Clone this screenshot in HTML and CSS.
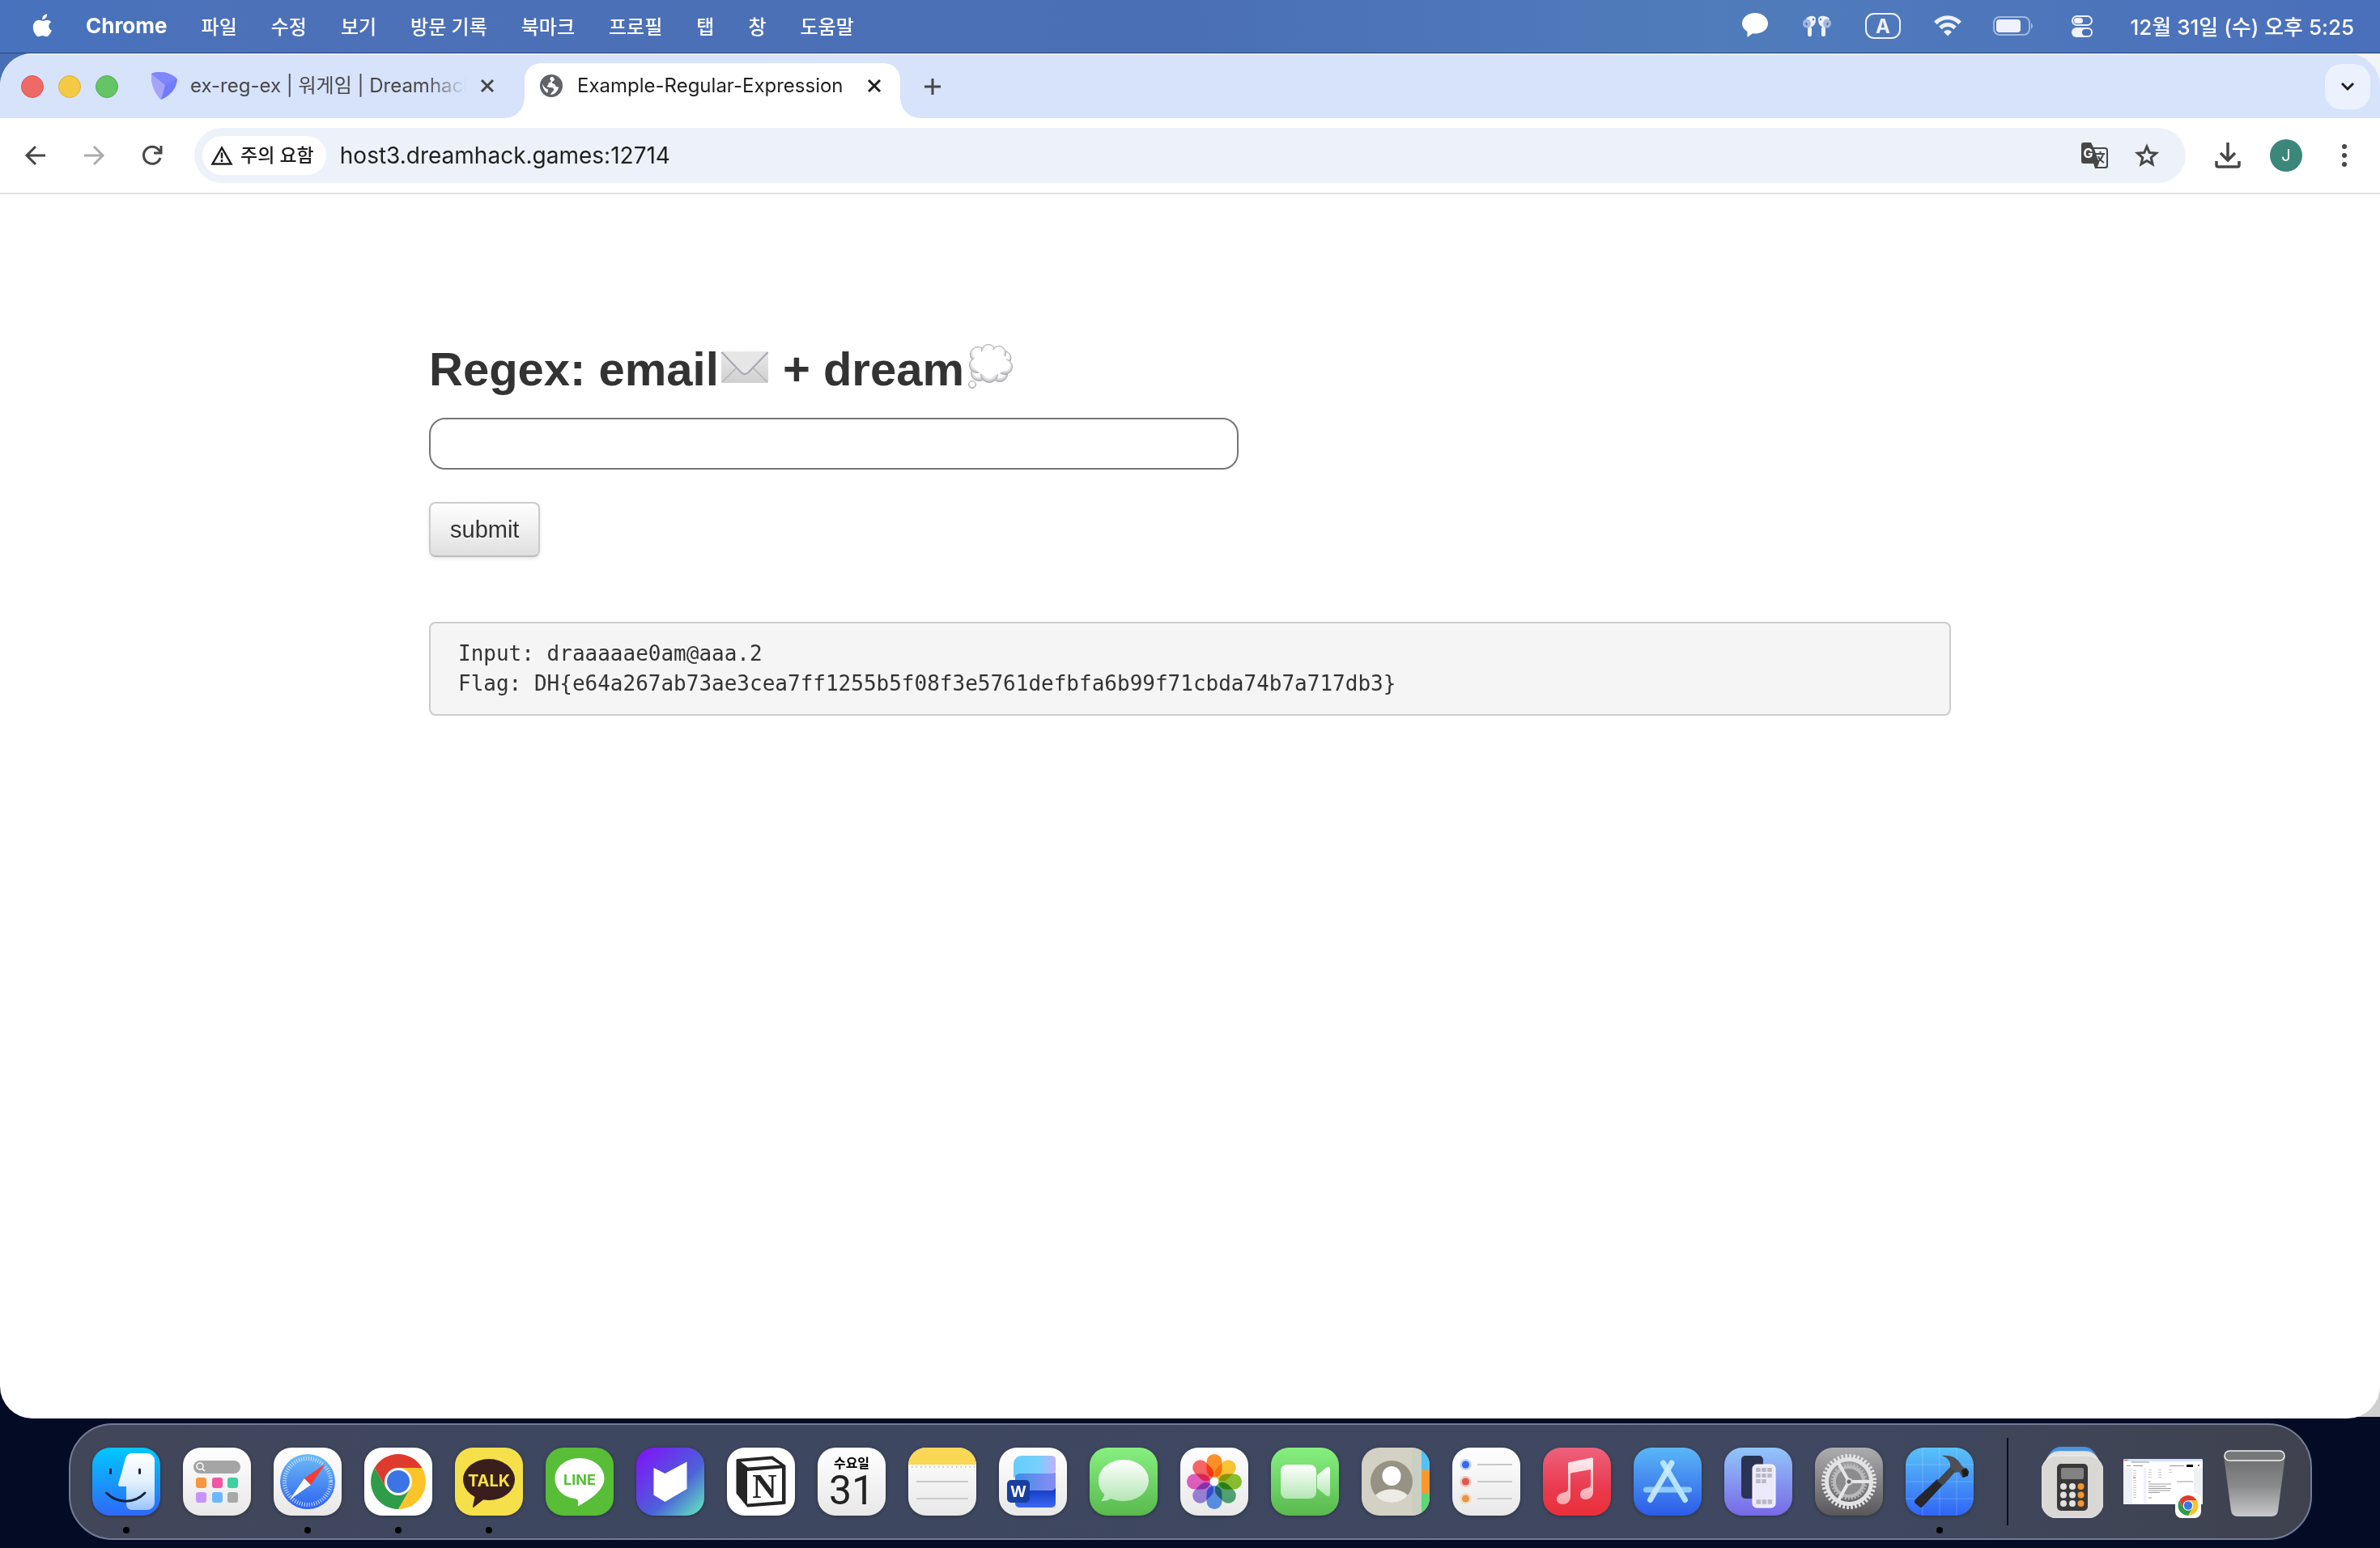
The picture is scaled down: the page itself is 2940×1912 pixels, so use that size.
FILE: index.html
```html
<!DOCTYPE html>
<html lang="ko">
<head>
    <meta charset="UTF-8">
    <meta name="viewport" content="width=device-width, initial-scale=1.0">
    <title>Example-Regular-Expression</title>
    <link rel="stylesheet" href="styles.css">
</head>
<body>
    <!-- shared gradients and the chrome logo -->
    <svg class="defs" width="0" height="0" aria-hidden="true">
        <defs>
            <linearGradient id="white" x2="0" y2="1"><stop offset="0" stop-color="#fff"/><stop offset="1" stop-color="#e8e8e8"/></linearGradient>
            <linearGradient id="green" x2="0" y2="1"><stop offset="0" stop-color="#86f07f"/><stop offset="1" stop-color="#59b94e"/></linearGradient>
            <linearGradient id="mint" x2="0" y2="1"><stop offset="0" stop-color="#fff"/><stop offset="1" stop-color="#b4e6b4"/></linearGradient>
            <linearGradient id="finder" x2="0" y2="1"><stop offset="0" stop-color="#00c8ff"/><stop offset="1" stop-color="#2f68f6"/></linearGradient>
            <linearGradient id="face" x2="0" y2="1"><stop offset="0" stop-color="#fff"/><stop offset=".5" stop-color="#e2f2fd"/><stop offset="1" stop-color="#9cc4fb"/></linearGradient>
            <linearGradient id="safari" x2="0" y2="1"><stop offset="0" stop-color="#6cbcf5"/><stop offset="1" stop-color="#2f62f0"/></linearGradient>
            <linearGradient id="purple" x2="1" y2="1"><stop offset=".1" stop-color="#7a1cf5"/><stop offset=".6" stop-color="#4b62d8"/><stop offset="1" stop-color="#66f0bc"/></linearGradient>
            <linearGradient id="music" x2="0" y2="1"><stop offset="0" stop-color="#ee617c"/><stop offset=".6" stop-color="#ea3a4e"/><stop offset="1" stop-color="#e92f38"/></linearGradient>
            <linearGradient id="note" x2="0" y2="1"><stop offset="0" stop-color="#fdeef0"/><stop offset="1" stop-color="#f6a5ac"/></linearGradient>
            <linearGradient id="store" x2="0" y2="1"><stop offset="0" stop-color="#5bb6f6"/><stop offset="1" stop-color="#2c5be8"/></linearGradient>
            <linearGradient id="mirror" x2="0" y2="1"><stop offset="0" stop-color="#92c6fa"/><stop offset="1" stop-color="#7868e6"/></linearGradient>
            <linearGradient id="gray" x2="0" y2="1"><stop offset="0" stop-color="#adadb0"/><stop offset="1" stop-color="#59575a"/></linearGradient>
            <linearGradient id="xcode" x2="0" y2="1"><stop offset="0" stop-color="#5ac2f9"/><stop offset="1" stop-color="#3065f5"/></linearGradient>
            <linearGradient id="bin" x2="0" y2="1"><stop offset="0" stop-color="#6c6d6f"/><stop offset=".5" stop-color="#898a8c"/><stop offset="1" stop-color="#c9c9cc"/></linearGradient>
            <linearGradient id="wordTop"><stop offset="0" stop-color="#66cdfb"/><stop offset=".6" stop-color="#76d0fb"/><stop offset="1" stop-color="#c3aefa"/></linearGradient>
            <linearGradient id="wordMid"><stop offset="0" stop-color="#3d8ee8"/><stop offset="1" stop-color="#8d8cf2"/></linearGradient>
            <linearGradient id="wordLow" x2="0" y2="1"><stop offset="0" stop-color="#0a31b4"/><stop offset="1" stop-color="#3d68f5"/></linearGradient>
            <linearGradient id="envelope" x2="0" y2="1"><stop offset="0" stop-color="#eaeaea"/><stop offset="1" stop-color="#cfcfcf"/></linearGradient>
            <radialGradient id="puff" cx=".5" cy=".4" r=".6"><stop offset=".5" stop-color="#fff"/><stop offset="1" stop-color="#b4b4b7"/></radialGradient>
        </defs>
        <symbol id="chrome" viewBox="0 0 84 84">
            <path fill="#e03a2f" d="M12.6 25A34 34 0 0 1 71.4 25H42L27.3 50.5z"/>
            <path fill="#fcc429" d="M71.4 25A34 34 0 0 1 42 76L56.7 50.5 42 25z"/>
            <path fill="#2f9c4a" d="M42 76A34 34 0 0 1 12.6 25L27.3 50.5H56.7z"/>
            <circle cx="42" cy="42" r="17" fill="#fff"/>
            <circle cx="42" cy="42" r="14" fill="#3b74e4"/>
        </symbol>
    </svg>

    <header class="menubar">
        <nav class="menus">
            <svg width="26" height="34" viewBox="0 0 28 34"><path fill="#fff" d="M19.500 1c.2 2-.6 3.900-1.700 5.300-1.200 1.400-3 2.400-4.700 2.300-.2-1.900.7-3.800 1.700-5C16 2.200 18 1.200 19.500 1zM25 12c-2 1.200-3.200 3-3.200 5.300 0 2.700 1.600 4.700 3.900 5.600-.5 1.500-1.200 3-2.200 4.400-1.300 2-2.700 3.900-4.800 3.900-2.100.1-2.800-1.200-5.200-1.200s-3.200 1.200-5.100 1.300c-2.100.1-3.700-2.100-5-4C.7 23.500-.2 17 2.400 13c1.500-2.500 3.800-3.900 6.200-3.900 2.300 0 3.800 1.300 5.700 1.300 1.900 0 3-1.300 5.700-1.300 2 0 3.800 1 5 2.900z"/></svg>
            <b>Chrome</b>
            <span>파일</span>
            <span>수정</span>
            <span>보기</span>
            <span>방문 기록</span>
            <span>북마크</span>
            <span>프로필</span>
            <span>탭</span>
            <span>창</span>
            <span>도움말</span>
        </nav>
        <div class="status">
            <svg width="38" height="34" viewBox="0 0 38 34"><path fill="#fff" d="M16 1c8.900 0 16 5.600 16 13s-7.100 12.500-16 12.500c-1 0-2 0-3-.2L6.500 31v-7C2.500 21.600 0 18 0 14 0 6.600 7.100 1 16 1z"/></svg>
            <svg width="42" height="34" viewBox="0 0 42 34"><path fill="#eef2fb" d="M5 8C8 4 17 3 17 9c0 5-2 8-5 9H8zM34 8C31 4 20 3 20 9c0 5 2 8 5 9h4z"/><rect x="7" y="18" width="5" height="12" rx="2" fill="#eef2fb"/><rect x="24" y="18" width="5" height="12" rx="2" fill="#eef2fb"/><ellipse cx="6" cy="14" rx="5" ry="5.500" fill="#a3b8df"/><ellipse cx="31" cy="14" rx="5" ry="5.500" fill="#a3b8df"/><circle cx="14" cy="9" r="1.200" fill="#4a70b8"/><circle cx="23" cy="9" r="1.200" fill="#4a70b8"/><path d="M5 13l1 3M32 13l-1 3" stroke="#4a70b8" stroke-width="2"/></svg>
            <svg width="48" height="34" viewBox="0 0 48 34"><rect x="1" y="2" width="42" height="30" rx="10" fill="none" stroke="#eef2fb" stroke-width="2"/><text x="22" y="26" class="input-mark">A</text></svg>
            <svg width="36" height="34" viewBox="0 0 36 34"><g fill="none" stroke="#eef2fb" stroke-width="5"><path d="M3 13.500C11 4.500 25 4.500 33 13.500"/><path d="M9 19.500c5-5.500 13-5.500 18 0"/></g><path fill="#eef2fb" d="M13 24.500c3-3.300 7-3.300 10 0l-5 5z"/></svg>
            <svg width="52" height="34" viewBox="0 0 52 34"><rect x="3" y="6" width="44" height="22" rx="7" fill="none" stroke="#a3b8df" stroke-width="2"/><rect x="6" y="9" width="30" height="16" rx="4" fill="#eef2fb"/><path fill="#a3b8df" d="M49 13a5 5 0 0 1 0 8z"/></svg>
            <svg width="48" height="34" viewBox="0 0 48 34"><rect x="12" y="5" width="24" height="11" rx="5.500" fill="none" stroke="#eef2fb" stroke-width="2"/><rect x="14" y="7" width="11" height="7" rx="3.500" fill="#eef2fb"/><rect x="11" y="19" width="26" height="12" rx="6" fill="#eef2fb"/><rect x="24" y="21" width="11" height="8" rx="4" fill="#4b70b7"/></svg>
            <time>12월 31일 (수) 오후 5:25</time>
        </div>
    </header>

    <main class="window">
        <div class="tabstrip">
            <div class="lights"><i class="close-light"></i><i class="min-light"></i><i class="max-light"></i></div>
            <div class="tab">
                <svg width="32" height="34" viewBox="0 0 32 34"><path fill="#6f7cfb" d="M0 2c10-4 24-2 32 7-1 11-8 20-20 25C6 28-1 15 0 2z"/><path fill="#a6a4fa" d="M0 2l17 14-5 18C4 27-1 15 0 2z"/><path fill="#7f86fb" d="M0 2c10-4 24-2 32 7l-15 7z"/></svg>
                <span class="title">ex-reg-ex | 워게임 | Dreamhack</span>
                <button class="plain" aria-label="탭 닫기"><svg width="20" height="20" viewBox="0 0 20 20"><path d="M3 3l14 14M17 3L3 17" stroke="#474747" stroke-width="3"/></svg></button>
            </div>
            <div class="tab active">
                <svg width="32" height="32" viewBox="0 0 32 32"><circle cx="16" cy="16" r="14" fill="#5f6368"/><path fill="#fff" d="M16 5c-2 1-2 3-1 4 2 1 0 3-2 3-1 1 0 3-2 4-1 1 1 2 4 2 3 0 4 1 4 3s-2 2-3 4l-1 2c5 0 10-5 10-10-2 1-4 0-4-2-1-2-4-1-4-3s3-2 3-4l-2-3zM5 13c0 5 2 9 6 12 1-2 2-4 0-5-3-1-5-4-6-7z"/></svg>
                <span class="title">Example-Regular-Expression</span>
                <button class="plain" aria-label="탭 닫기"><svg width="20" height="20" viewBox="0 0 20 20"><path d="M3 3l14 14M17 3L3 17" stroke="#1f1f1f" stroke-width="3"/></svg></button>
            </div>
            <button class="plain newtab" aria-label="새 탭"><svg width="22" height="22" viewBox="0 0 22 22"><path d="M11 1v20M1 11h20" stroke="#474747" stroke-width="3"/></svg></button>
            <button class="plain search-tabs" aria-label="탭 검색"><svg width="20" height="14" viewBox="0 0 20 14"><path d="M3 3l7 7 7-7" fill="none" stroke="#1f1f1f" stroke-width="3"/></svg></button>
        </div>

        <div class="toolbar">
            <div class="nav-buttons">
                <button class="plain" aria-label="뒤로"><svg width="32" height="32" viewBox="0 0 32 32"><path d="M28 16H6M16 5L5 16l11 11" fill="none" stroke="#474747" stroke-width="3"/></svg></button>
                <button class="plain" aria-label="앞으로"><svg width="32" height="32" viewBox="0 0 32 32"><path d="M4 16h22M16 5l11 11-11 11" fill="none" stroke="#ababab" stroke-width="3"/></svg></button>
                <button class="plain" aria-label="새로고침"><svg width="32" height="32" viewBox="0 0 32 32"><path d="M26 19a10.500 10.500 0 1 1-2-10l3 3M27 4v9h-9" fill="none" stroke="#474747" stroke-width="3"/></svg></button>
            </div>
            <div class="omnibox">
                <button class="chip"><svg width="28" height="26" viewBox="0 0 28 26"><path d="M14 3.500L2.500 23.500h23z" fill="none" stroke="#1f1f1f" stroke-width="2.500"/><path d="M14 9.500v7M14 18v3" stroke="#1f1f1f" stroke-width="2.500"/></svg>주의 요함</button>
                <input class="url" type="text" aria-label="주소창" value="host3.dreamhack.games:12714">
                <button class="plain" aria-label="번역"><svg width="34" height="34" viewBox="0 0 34 34"><path fill="#474747" d="M3 1h9l3 6h14a4 4 0 0 1 4 4v19a3 3 0 0 1-3 3H17l-2-6H3a3 3 0 0 1-3-3V4a3 3 0 0 1 3-3z"/><path fill="#edf2fa" d="M16 9h13a2 2 0 0 1 2 2v18a2 2 0 0 1-2 2h-9l2-5z"/><text x="8.500" y="20" class="g-mark">G</text><path d="M18 15h11M23.500 12v3M27 15c-1 5-4 8-7 10M21 18c1 3 4 6 7 8" fill="none" stroke="#474747" stroke-width="2"/></svg></button>
                <button class="plain" aria-label="북마크에 추가"><svg width="32" height="32" viewBox="0 0 32 32"><path d="M16 5l3.200 7.600 8.300.7-6.300 5.400 1.900 8.100L16 22.500l-7.100 4.300 1.900-8.100-6.300-5.400 8.300-.7z" fill="none" stroke="#474747" stroke-width="3"/></svg></button>
            </div>
            <button class="plain" aria-label="다운로드"><svg width="32" height="34" viewBox="0 0 32 34"><path d="M16 1v21M7 14l9 9 9-9M2 24v5a2 2 0 0 0 2 2h24a2 2 0 0 0 2-2v-5" fill="none" stroke="#474747" stroke-width="3.500"/></svg></button>
            <button class="avatar">J</button>
            <button class="plain" aria-label="메뉴"><svg width="32" height="32" viewBox="0 0 32 32"><g fill="#474747"><circle cx="16" cy="5" r="3"/><circle cx="16" cy="16" r="3"/><circle cx="16" cy="27" r="3"/></g></svg></button>
        </div>

        <div class="page">
            <form class="container">
                <h2 id="regex">Regex: email<svg width="63" height="60" viewBox="0 0 63 60"><rect x="3" y="10" width="58" height="39" rx="2" fill="url(#envelope)"/><path d="M4 48l18-18M60 48L42 30" stroke="#b4b4b8" stroke-width="1.500"/><path d="M3.500 11l24 25q4.500 4 9 0l24-25" fill="#e6e6e7" stroke="#a5a7b2" stroke-width="2"/></svg> + dream<svg width="63" height="60" viewBox="0 0 63 60"><g fill="url(#puff)" stroke="#a9a9ad"><circle cx="10" cy="51" r="4.500"/><circle cx="50" cy="18" r="8"/><circle cx="18" cy="37" r="9.500"/><circle cx="44" cy="38" r="9.500"/><circle cx="17" cy="14" r="9.500"/><circle cx="30" cy="10" r="8.500"/><circle cx="43" cy="12" r="8.500"/><circle cx="16" cy="27" r="9.500"/><circle cx="50" cy="29" r="9.500"/><circle cx="31" cy="38" r="10.500"/></g><ellipse cx="32" cy="24" rx="21" ry="16" fill="#fff"/></svg></h2>
                <input class="answer" type="text" aria-labelledby="regex">
                <button class="submit" type="button">submit</button>
                <pre>Input: draaaaae0am@aaa.2
Flag: DH{e64a267ab73ae3cea7ff1255b5f08f3e5761defbfa6b99f71cbda74b7a717db3}</pre>
            </form>
        </div>
    </main>

    <footer class="dock">
        <div class="apps">
            <!-- Finder -->
            <div class="app running"><svg viewBox="0 0 84 84"><rect width="84" height="84" fill="url(#finder)"/><path fill="url(#face)" d="M49 7H68a9 9 0 0 1 9 9V68a9 9 0 0 1-9 9H49a7 7 0 0 1-7-7V48H34q-2 0-2-3Q37 29 41 13 43 7 49 7z"/><path d="M22.500 27v4.500M58.500 27v4.500M17.500 56C31 69.500 52 69.500 65 56" fill="none" stroke="#12233c" stroke-width="3" stroke-linecap="round"/></svg></div>
            <!-- Apps -->
            <div class="app"><svg viewBox="0 0 84 84"><rect width="84" height="84" fill="url(#white)"/><rect x="13" y="16" width="58" height="16" rx="8" fill="#a5a5a5"/><circle cx="21" cy="23" r="4" fill="none" stroke="#fff" stroke-width="1.500"/><path d="M24 26l3 3" stroke="#fff" stroke-width="1.500"/><rect x="16" y="37" width="13" height="13" rx="3" fill="#f8963f"/><rect x="36" y="37" width="13" height="13" rx="3" fill="#f257a7"/><rect x="55" y="37" width="13" height="13" rx="3" fill="#3fd0a1"/><rect x="16" y="55" width="13" height="13" rx="3" fill="#c894fb"/><rect x="36" y="55" width="13" height="13" rx="3" fill="#6cb8fb"/><rect x="55" y="55" width="13" height="13" rx="3" fill="#a8a8a8"/></svg></div>
            <!-- Safari -->
            <div class="app running"><svg viewBox="0 0 84 84"><rect width="84" height="84" fill="url(#white)"/><circle cx="42" cy="42" r="34" fill="url(#safari)"/><circle cx="42" cy="42" r="28.500" fill="none" stroke="#cfe5fc" stroke-width="5" stroke-dasharray="1 2"/><path fill="#fff" d="M20 64L38 38l8 8z"/><path fill="#fb3b35" d="M64 20L46 46l-8-8z"/></svg></div>
            <!-- Chrome -->
            <div class="app running"><svg viewBox="0 0 84 84"><rect width="84" height="84" fill="#fff"/><use href="#chrome"/></svg></div>
            <!-- KakaoTalk -->
            <div class="app running"><svg viewBox="0 0 84 84"><rect width="84" height="84" fill="#f6e04a"/><ellipse cx="42" cy="39.500" rx="32" ry="25.500" fill="#391e1d"/><path fill="#391e1d" d="M25 58l-3 15q0 2 2 0l14-11z"/><text x="42" y="48" class="talk">TALK</text></svg></div>
            <!-- LINE -->
            <div class="app"><svg viewBox="0 0 84 84"><rect width="84" height="84" fill="#58bd37"/><path fill="#fff" d="M42 13c17 0 30.500 11 30.500 25 0 8-5 14-11 20-6 5-13 10-20 13.500-2 1-2 0-1.500-3 .5-4-1-5-4-5.500C21.500 61 11.500 51 11.500 38 11.500 24 25 13 42 13z"/><text x="42" y="46" class="line">LINE</text></svg></div>
            <!-- Bookmark -->
            <div class="app"><svg viewBox="0 0 84 84"><rect width="84" height="84" fill="url(#purple)"/><path fill="#fff" d="M21.500 25L35.500 32 62.500 17.500V51L35.500 67 21.500 58.500z"/></svg></div>
            <!-- Notion -->
            <div class="app"><svg viewBox="0 0 84 84"><rect width="84" height="84" fill="#fff"/><path fill="#252525" stroke="#252525" stroke-width="3" stroke-linejoin="round" d="M13 15.500L56 12l15 11v45.500L26 72 13 56z"/><path fill="#fff" d="M17 17.500L55 14.500l11 7-40 3zM25 29l43-3.500V66L25 69.500z"/><text x="46.500" y="62" class="notion">N</text></svg></div>
            <!-- Calendar -->
            <div class="app"><svg viewBox="0 0 84 84"><rect width="84" height="84" fill="url(#white)"/><text x="42" y="25" class="weekday">수요일</text><text x="42" y="70" class="day">31</text></svg></div>
            <!-- Notes -->
            <div class="app"><svg viewBox="0 0 84 84"><rect width="84" height="84" fill="url(#white)"/><rect width="84" height="21" fill="#fad754"/><path d="M4 24h78" stroke="#b9b9b9" stroke-width="1.500" stroke-dasharray="1.500 4"/><path d="M10 42h64M10 63h64" stroke="#cacaca" stroke-width="2"/></svg></div>
            <!-- Word -->
            <div class="app"><svg viewBox="0 0 84 84"><rect width="84" height="84" fill="url(#white)"/><rect x="20" y="46" width="50" height="28" rx="5" fill="url(#wordLow)"/><path fill="url(#wordMid)" d="M20 31h50v17a5 5 0 0 1-5 5H20z"/><path fill="url(#wordTop)" d="M28 10h37a5 5 0 0 1 5 5v13a4 4 0 0 1-4 4H26q-5 0-8 6V20a10 10 0 0 1 10-10z"/><rect x="10" y="40" width="28" height="28" rx="5" fill="#173f9f"/><text x="24" y="61" class="word">W</text></svg></div>
            <!-- Messages -->
            <div class="app"><svg viewBox="0 0 84 84"><rect width="84" height="84" fill="url(#green)"/><path fill="url(#mint)" d="M42 15c17 0 31 11 31 25.500S59 66 42 66c-6 0-11-1-16-3-3 2-7 3.500-11 3-1 0-1-1 0-1.500 2-2 3-4 3-7C13 53 11 47 11 40.500 11 26 25 15 42 15z"/></svg></div>
            <!-- Photos -->
            <div class="app"><svg viewBox="0 0 84 84"><rect width="84" height="84" fill="url(#white)"/><g class="petals"><rect x="32.500" y="8" width="19" height="29" rx="9.500" fill="#ff9228"/><rect x="32.500" y="8" width="19" height="29" rx="9.500" fill="#fcc935" transform="rotate(45 42 42)"/><rect x="32.500" y="8" width="19" height="29" rx="9.500" fill="#8ec630" transform="rotate(90 42 42)"/><rect x="32.500" y="8" width="19" height="29" rx="9.500" fill="#57ab78" transform="rotate(135 42 42)"/><rect x="32.500" y="8" width="19" height="29" rx="9.500" fill="#5f97f0" transform="rotate(180 42 42)"/><rect x="32.500" y="8" width="19" height="29" rx="9.500" fill="#a187e2" transform="rotate(225 42 42)"/><rect x="32.500" y="8" width="19" height="29" rx="9.500" fill="#e861c6" transform="rotate(270 42 42)"/><rect x="32.500" y="8" width="19" height="29" rx="9.500" fill="#fa6768" transform="rotate(315 42 42)"/></g><circle cx="42" cy="42" r="5" fill="#fff"/></svg></div>
            <!-- FaceTime -->
            <div class="app"><svg viewBox="0 0 84 84"><rect width="84" height="84" fill="url(#green)"/><rect x="12" y="21" width="44" height="42" rx="8" fill="url(#mint)"/><path fill="url(#mint)" d="M57 34l11-9q5-3 5 2v30q0 5-5 2l-11-9z"/></svg></div>
            <!-- Contacts -->
            <div class="app"><svg viewBox="0 0 84 84"><rect width="84" height="84" fill="#d3d1c4"/><rect x="62" width="12" height="84" fill="#c9cfc2"/><rect x="74" width="10" height="28" fill="#54c0f6"/><rect x="74" y="28" width="10" height="28" fill="#f9982f"/><rect x="74" y="56" width="10" height="28" fill="#5fd674"/><circle cx="37" cy="42" r="26" fill="#979384"/><ellipse cx="37" cy="35" rx="11.500" ry="12" fill="#fff"/><path fill="#ecebe6" d="M17 59C26 49 48 49 57 59 47 71 27 71 17 59z"/></svg></div>
            <!-- Reminders -->
            <div class="app"><svg viewBox="0 0 84 84"><rect width="84" height="84" fill="url(#white)"/><circle cx="16.500" cy="21" r="7" fill="#bcd3fb"/><circle cx="16.500" cy="21" r="4.500" fill="#3667ee"/><circle cx="16.500" cy="42" r="7" fill="#f3c3bf"/><circle cx="16.500" cy="42" r="4.500" fill="#dd5a50"/><circle cx="16.500" cy="63" r="7" fill="#f6dcbd"/><circle cx="16.500" cy="63" r="4.500" fill="#e8944a"/><path d="M31 21h43M31 42h43M31 63h43" stroke="#c9c9c9" stroke-width="2"/></svg></div>
            <!-- Music -->
            <div class="app"><svg viewBox="0 0 84 84"><rect width="84" height="84" fill="url(#music)"/><path fill="url(#note)" d="M33 18l27-5.500q2-.5 2 2V55c0 5-4 9-9 9s-7-3-7-6c0-5 4-7 8-8q5-1 5-4V27L34 31.500V60c0 6-4 10-9 10s-8-3-8-6c0-5 4-7.500 8-8.500q6-1 6-4V20q0-2 2-2z"/></svg></div>
            <!-- App Store -->
            <div class="app"><svg viewBox="0 0 84 84"><rect width="84" height="84" fill="url(#store)"/><g stroke-width="7" stroke-linecap="round"><path d="M15.500 52h53" stroke="#8ecbfb"/><path d="M36.500 19l27 45.500" stroke="#b5e2fe"/><path d="M47 19L20.500 64.500" stroke="#c9ecff" stroke-opacity=".92"/></g></svg></div>
            <!-- iPhone Mirroring -->
            <div class="app"><svg viewBox="0 0 84 84"><rect width="84" height="84" fill="url(#mirror)"/><rect x="21" y="10" width="27" height="53" rx="5" fill="#2b3354"/><rect x="35" y="21" width="28" height="53" rx="5" fill="#eceafa" stroke="#fff"/><path d="M42 25v20M49 25v20" stroke="#b9b9c4" stroke-width="5.500" stroke-dasharray="5 2"/><path d="M56 25v12" stroke="#b9b9c4" stroke-width="5.500" stroke-dasharray="5 2"/><path d="M39.500 67H60" stroke="#b9b9c4" stroke-width="5.500" stroke-dasharray="5.500 1.500"/></svg></div>
            <!-- Settings -->
            <div class="app"><svg viewBox="0 0 84 84"><rect width="84" height="84" fill="url(#gray)"/><circle cx="42" cy="42" r="18" fill="#8c8b8e" stroke="#b9b9bb" stroke-width="4"/><circle cx="42" cy="42" r="21" fill="none" stroke="#b9b9bb" stroke-width="3" stroke-dasharray="2 2"/><circle cx="42" cy="42" r="31.500" fill="none" stroke="#e6e6e6" stroke-width="5" stroke-dasharray="2.600 2.350"/><circle cx="42" cy="42" r="27.500" fill="none" stroke="#e2e2e2" stroke-width="5"/><path d="M42 42h26M42 42L29 19M42 42L29 65" stroke="#e6e6e6" stroke-width="4"/><circle cx="42" cy="42" r="3.500" fill="#6b6a6c" stroke="#dcdcdc" stroke-width="2"/></svg></div>
            <!-- Xcode -->
            <div class="app running"><svg viewBox="0 0 84 84"><rect width="84" height="84" fill="url(#xcode)"/><path d="M21 0v84M42 0v84M63 0v84M0 21h84M0 42h84M0 63h84" stroke="#fff" stroke-opacity=".2"/><path fill="#26262b" d="M39 39l8 6-26 28q-2 2-4 0l-5-4q-2-2 0-5z"/><path fill="#45464d" d="M56 23l6 6-16 18-7-6z"/><path fill="#4e4f57" d="M45 10c10-1 18 2 22 9l3 4 8 6-2 6-6 2-4-7-5 1-6-7c1-6-2-11-10-14z"/><path fill="#1d1d20" d="M69 28l6-3 3 5-1 5-6 2z"/></svg></div>
        </div>
        <div class="separator"></div>
        <div class="recent">
            <svg width="76" height="90" viewBox="0 0 76 90"><rect x="8" y="2" width="60" height="50" rx="16" fill="#4a94df"/><rect x="4" y="7" width="68" height="60" rx="18" fill="#c9c9c9"/><rect x="4" y="8" width="68" height="60" rx="18" fill="#e2e2e0"/><rect x="0" y="13" width="76" height="77" rx="19" fill="#d9d8d4" stroke="#efefee"/><rect x="19" y="23" width="38" height="58" rx="5" fill="#3a3838"/><rect x="24" y="28" width="28" height="14" rx="2" fill="#828282"/><g fill="#e2e2e2"><circle cx="27" cy="51" r="4"/><circle cx="38" cy="51" r="4"/><circle cx="27" cy="61.500" r="4"/><circle cx="38" cy="61.500" r="4"/><circle cx="27" cy="72" r="4"/><circle cx="38" cy="72" r="4"/></g><g fill="#f39533"><circle cx="48.500" cy="51" r="4"/><circle cx="48.500" cy="61.500" r="4"/><circle cx="48.500" cy="72" r="4"/></g></svg>
            <svg width="98" height="90" viewBox="0 0 98 90"><rect y="17" width="98" height="56" rx="2" fill="#fff"/><path fill="#d3e0fa" d="M2 17h94q2 0 2 2v1H0v-1q0-2 2-2z"/><path fill="#eef1f5" d="M0 28h11v45H0zM25 28h3v45h-3zM87 28h11v45H87z"/><path d="M1 18.500h3" stroke="#e0524c"/><path d="M4 18.500h2" stroke="#58b95f"/><path d="M10 21h22M4 25.500h5M12 25.500h12M57 25.500h18" stroke="#8c939c"/><rect x="78" y="24" width="8" height="3" fill="#000"/><circle cx="93" cy="25" r="1" fill="#7c2838"/><path d="M14 31v34M33 30v12M45 30v12M58 30v6" stroke="#c9c9c9" stroke-width="4" stroke-dasharray="1 2"/><path d="M31 45h3M31 48h28M31 51h22M31 53.500h28M31 56h27M31 58.500h14M66 45h20M31 65h4" stroke="#9b9b9b"/><path d="M12 40h3" stroke="#e0524c"/><rect x="64" y="59" width="32" height="31" rx="8" fill="#fff"/><use href="#chrome" x="64" y="59" width="32" height="31"/></svg>
            <svg width="78" height="90" viewBox="0 0 78 90"><path fill="url(#bin)" d="M1 13l9 68q1 7 8 7h42q7 0 8-7l9-68z"/><rect x="2" y="7" width="74" height="12" rx="6" fill="#77787a" stroke="#f4f4f4" stroke-width="1.500"/></svg>
        </div>
    </footer>
</body>
</html>
```
FILE: styles.css
```css
* {
    box-sizing: border-box;
}
body {
    margin: 0;
    min-height: 100vh;
    display: flex;
    flex-direction: column;
    font-family: Inter, "Noto Sans CJK KR", sans-serif;
    font-size: 24px;
    color: #1f1f1f;
    background:
        linear-gradient(#f4f4f4, #cfcfcf) right 66px / 60px calc(100% - 228px) no-repeat,
        linear-gradient(#4a70b8 0, #456bb2 200px, #030b25 400px);
    overflow-x: hidden;
}
svg {
    display: block;
    flex: none;
}
button {
    font: inherit;
    color: inherit;
    cursor: pointer;
}
.defs {
    position: absolute;
}
.plain {
    display: flex;
    align-items: center;
    justify-content: center;
    padding: 0;
    border: none;
    background: none;
}

/* menu bar */
.menubar {
    display: flex;
    justify-content: space-between;
    align-items: center;
    height: 66px;
    padding: 0 32px 2px 40px;
    color: #fff;
    background: linear-gradient(90deg, #4772bd, #4d71b8 12%, #4a6fb5 50%, #507cbb 72%, #4a6fbb);
    border-bottom: 1px solid #2c4577;
    font-weight: 500;
    white-space: nowrap;
}
.menus {
    display: flex;
    align-items: center;
    gap: 42px;
}
.menus b {
    font-size: 26px;
}
.menus svg {
    margin-right: -2px;
}
.status {
    display: flex;
    align-items: center;
    gap: 36px;
}
time {
    font-size: 26px;
}
.input-mark {
    font: bold 24px Inter, sans-serif;
    fill: #eef2fb;
    text-anchor: middle;
}

/* browser window */
.window {
    flex: 1;
    display: flex;
    flex-direction: column;
    background: #fff;
    border-radius: 40px;
    overflow: hidden;
}
.tabstrip {
    display: flex;
    align-items: center;
    height: 80px;
    padding: 0 12px 0 26px;
    background: #d7e2fb;
    border-top: 2px solid #eaf0fd;
}
.lights {
    display: flex;
    gap: 18px;
    margin-right: 24px;
}
.lights i {
    width: 28px;
    height: 28px;
    border-radius: 50%;
}
.close-light {
    background: #ee6a66;
    border: 1px solid #df5450;
}
.min-light {
    background: #f4c944;
    border: 1px solid #dfb12d;
}
.max-light {
    background: #65c466;
    border: 1px solid #4fae50;
}
.tab {
    position: relative;
    display: flex;
    align-items: center;
    gap: 16px;
    width: 464px;
    height: 68px;
    padding: 0 22px 12px 17px;
    margin: 10px 14px 0 0;
    color: #474747;
}
.title {
    flex: 1;
    overflow: hidden;
    line-height: 36px;
    white-space: nowrap;
    -webkit-mask-image: linear-gradient(90deg, #000 calc(100% - 50px), transparent);
}
.tab.active {
    margin-right: 0;
    color: #1f1f1f;
    background: #fff;
    border-radius: 20px 20px 0 0;
}
.active .title {
    -webkit-mask-image: none;
}
.tab.active::before,
.tab.active::after {
    content: "";
    position: absolute;
    bottom: 0;
    width: 24px;
    height: 24px;
}
.tab.active::before {
    right: 100%;
    background: radial-gradient(circle at 0 0, transparent 23px, #fff 24px);
}
.tab.active::after {
    left: 100%;
    background: radial-gradient(circle at 100% 0, transparent 23px, #fff 24px);
}
.newtab {
    width: 48px;
    height: 48px;
    margin-left: 16px;
}
.search-tabs {
    width: 56px;
    height: 56px;
    margin-left: auto;
    border-radius: 20px;
    background: #ebf2fd;
}
.toolbar {
    display: flex;
    align-items: center;
    gap: 36px;
    height: 94px;
    padding: 0 28px;
    border-bottom: 2px solid #e1e1e1;
}
.nav-buttons {
    display: flex;
    gap: 40px;
}
.omnibox {
    flex: 1;
    display: flex;
    align-items: center;
    gap: 31px;
    height: 68px;
    padding: 0 32px 0 10px;
    border-radius: 34px;
    background: #edf2fa;
}
.chip {
    display: flex;
    align-items: center;
    gap: 9px;
    height: 48px;
    padding: 0 15px 0 10px;
    margin-right: -14px;
    border: none;
    border-radius: 24px;
    background: #fff;
    font-size: 23px;
    font-weight: 500;
    line-height: 30px;
    white-space: nowrap;
}
.url {
    flex: 1;
    padding: 0;
    border: none;
    outline: none;
    background: none;
    color: #1f1f1f;
    font: 28px Inter, "Noto Sans CJK KR", sans-serif;
}
.g-mark {
    font: bold 16px Inter, sans-serif;
    fill: #fff;
    text-anchor: middle;
}
.avatar {
    width: 40px;
    height: 40px;
    padding: 0;
    border: none;
    border-radius: 50%;
    background: #3b8779;
    color: #fff;
    font-size: 20px;
}

/* page */
.page {
    flex: 1;
    padding: 176px 30px 80px;
    font-family: "Liberation Sans", Arial, sans-serif;
    color: #333;
}
.container {
    display: flex;
    flex-direction: column;
    align-items: flex-start;
    max-width: 1880px;
    margin: 0 auto;
}
h2 {
    margin: 0 0 20px;
    font-size: 58px;
    line-height: 80px;
}
h2 svg {
    display: inline-block;
    vertical-align: -8px;
}
.answer {
    width: 1000px;
    max-width: 100%;
    height: 64px;
    padding: 0 12px;
    border: 2px solid #767676;
    border-radius: 20px;
    font-size: 28px;
}
.submit {
    height: 68px;
    margin: 40px 0 80px;
    padding: 0 24px;
    border: 2px solid #ccc;
    border-bottom-color: #bbb;
    border-radius: 8px;
    background: linear-gradient(#fff, #e0e0e0);
    box-shadow: 0 2px 4px rgba(0, 0, 0, 0.1);
    font-size: 29px;
    text-shadow: 0 2px 2px rgba(255, 255, 255, 0.75);
}
pre {
    width: 100%;
    margin: 0;
    padding: 19px 34px;
    border: 2px solid #ccc;
    border-radius: 8px;
    background: #f5f5f5;
    font: 26px/37px "DejaVu Sans Mono", monospace;
    overflow: hidden;
}

/* dock */
.dock {
    display: flex;
    align-items: center;
    align-self: center;
    height: 144px;
    margin: 6px 0 10px;
    padding: 0 30px 0 27px;
    border: 2px solid #747c95;
    border-radius: 54px;
    background: linear-gradient(90deg, #424659, #3e4760 20%, #3f4860 80%, #3f424e);
}
.apps {
    display: flex;
    gap: 28px;
}
.app {
    position: relative;
    width: 84px;
    height: 84px;
}
.app svg {
    width: 84px;
    height: 84px;
    border-radius: 22px;
    box-shadow: 0 1px 4px rgba(0, 0, 0, 0.3);
}
.running::after {
    content: "";
    position: absolute;
    top: 98px;
    left: 38px;
    width: 8px;
    height: 8px;
    border-radius: 50%;
    background: #000;
}
.separator {
    width: 2px;
    height: 108px;
    margin: 0 41px;
    background: #050e2b;
}
.recent {
    display: flex;
    gap: 25px;
}
.petals rect {
    mix-blend-mode: multiply;
}
.talk, .line, .notion, .weekday, .day, .word {
    text-anchor: middle;
}
.talk {
    font: bold 20px Inter, sans-serif;
    fill: #f6e04a;
}
.line {
    font: bold 18px Inter, sans-serif;
    fill: #58bd37;
}
.notion {
    font: bold 42px "Liberation Serif", serif;
    fill: #252525;
}
.weekday {
    font: bold 16px "Noto Sans CJK KR", sans-serif;
}
.day {
    font: 400 50px Roboto, sans-serif;
    fill: #222;
}
.word {
    font: bold 20px "Liberation Sans", sans-serif;
    fill: #fff;
}
```
